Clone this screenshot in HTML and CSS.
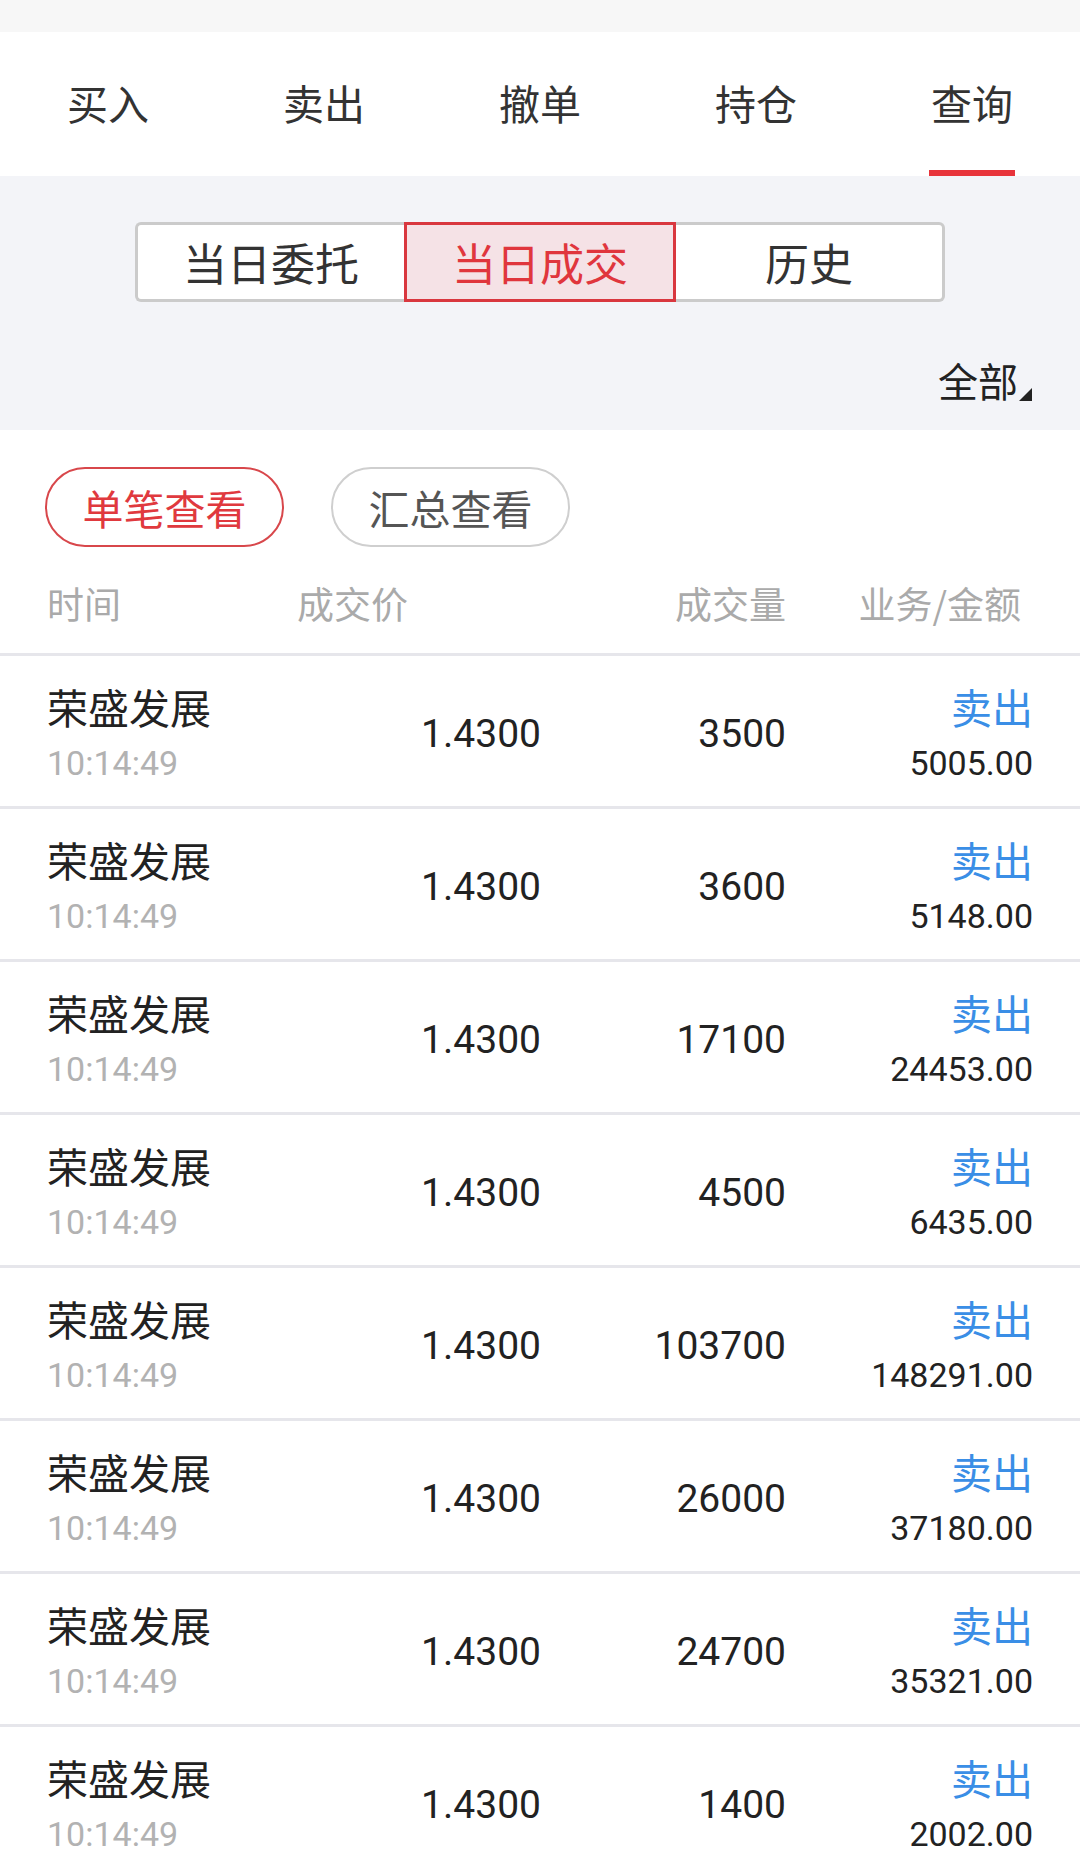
FILE: index.html
```html
<!DOCTYPE html>
<html lang="zh-CN">
<head>
  <meta charset="UTF-8" />
  <meta name="viewport" content="width=device-width, initial-scale=1.0"/>
  <title>查询 - 当日成交</title>
  <link rel="stylesheet" href="styles.css">
</head>
<body>
  <div class="status"></div>

  <nav class="tabs">
    <a class="tab"><span>买入</span></a>
    <a class="tab"><span>卖出</span></a>
    <a class="tab"><span>撤单</span></a>
    <a class="tab"><span>持仓</span></a>
    <a class="tab active"><span>查询</span></a>
  </nav>

  <section class="filter">
    <div class="segments">
      <div class="seg">当日委托</div>
      <div class="seg active">当日成交</div>
      <div class="seg">历史</div>
    </div>
    <div class="filter-row">
      <div class="all">全部<i class="corner"></i></div>
    </div>
  </section>

  <section class="list">
    <div class="pills">
      <span class="pill active">单笔查看</span>
      <span class="pill">汇总查看</span>
    </div>

    <div class="row head">
      <div>时间</div>
      <div>成交价</div>
      <div class="r">成交量</div>
      <div class="r last">业务/金额</div>
    </div>

    <div id="trades"></div>
  </section>

  <script>
    const trades = [
      ['3500', '5005.00'],
      ['3600', '5148.00'],
      ['17100', '24453.00'],
      ['4500', '6435.00'],
      ['103700', '148291.00'],
      ['26000', '37180.00'],
      ['24700', '35321.00'],
      ['1400', '2002.00']
    ];

    const list = document.getElementById('trades');
    trades.forEach(t => {
      const el = document.createElement('div');
      el.className = 'row trade';
      el.innerHTML = `
        <div class="stack">
          <div class="name">荣盛发展</div>
          <div class="time">10:14:49</div>
        </div>
        <div class="num">1.4300</div>
        <div class="num">${t[0]}</div>
        <div class="stack r">
          <div class="side">卖出</div>
          <div class="amount">${t[1]}</div>
        </div>
      `;
      list.appendChild(el);
    });
  </script>
</body>
</html>
```

FILE: styles.css
```css
* {
  box-sizing: border-box;
}
body {
  margin: 0;
  width: 1080px;
  height: 1874px;
  overflow: hidden;
  background: #fff;
  color: #222;
  font-family: "Noto Sans CJK SC", "Noto Sans", sans-serif;
}

.status {
  height: 32px;
  background: #f7f7f7;
}

/* top tabs */
.tabs {
  display: grid;
  grid-template-columns: repeat(5, 1fr);
  height: 144px;
  background: #fff;
}
.tab {
  display: flex;
  justify-content: center;
  align-items: flex-end;
  color: #333;
  font-size: 41px;
}
.tab span {
  display: block;
  line-height: 50px;
  padding: 0 2px 43px;
  border-bottom: 6px solid transparent;
}
.tab.active span {
  border-bottom-color: #e8343b;
}

/* segmented filter */
.filter {
  height: 254px;
  background: #f3f4f8;
  padding-top: 46px;
}
.segments {
  display: flex;
  width: 810px;
  height: 80px;
  margin: 0 auto;
}
.seg {
  flex: 1;
  display: flex;
  align-items: center;
  justify-content: center;
  background: #fff;
  border: 3px solid #cbcbcb;
  font-size: 44px;
  color: #333;
}
.seg:first-child {
  border-right: none;
  border-radius: 6px 0 0 6px;
}
.seg:last-child {
  border-left: none;
  border-radius: 0 6px 6px 0;
}
.seg.active {
  background: #f5e2e6;
  border-color: #d9373f;
  color: #e0363d;
}
.filter-row {
  display: flex;
  justify-content: flex-end;
  padding: 50px 48px 0 0;
}
.all {
  display: flex;
  align-items: flex-end;
  font-size: 40px;
  line-height: 56px;
  color: #222;
}
.corner {
  width: 0;
  height: 0;
  margin: 0 0 7px 1px;
  border-left: 13px solid transparent;
  border-bottom: 13px solid #222;
}

/* list */
.pills {
  display: flex;
  gap: 47px;
  padding: 37px 0 0 45px;
}
.pill {
  width: 239px;
  height: 80px;
  display: flex;
  align-items: center;
  justify-content: center;
  border: 2px solid #cfcfcf;
  border-radius: 40px;
  font-size: 41px;
  color: #555;
}
.pill.active {
  border-color: #d8474b;
  color: #e0393e;
}

.row {
  display: grid;
  grid-template-columns: 250px 244px 245px 247px;
  padding: 0 47px;
  border-bottom: 3px solid #e6e6eb;
}
.row .r {
  text-align: right;
}
.head {
  height: 109px;
  padding-top: 6px;
  line-height: 100px;
  font-size: 37px;
  color: #aaa;
}
.head .last {
  padding-right: 12px;
}

.trade {
  height: 153px;
  align-items: center;
}
.stack {
  align-self: start;
  padding-top: 25px;
}
.name, .side {
  font-size: 41px;
  line-height: 50px;
  color: #222;
}
.side {
  color: #3a8ee6;
}
.time, .amount {
  font-family: Roboto, "Noto Sans", sans-serif;
  font-size: 34px;
  line-height: 64px;
}
.time {
  color: #b2b2b2;
}
.amount {
  color: #222;
}
.num {
  text-align: right;
  padding-top: 6px;
  font-family: Roboto, "Noto Sans", sans-serif;
  font-size: 39px;
  color: #222;
}
```
